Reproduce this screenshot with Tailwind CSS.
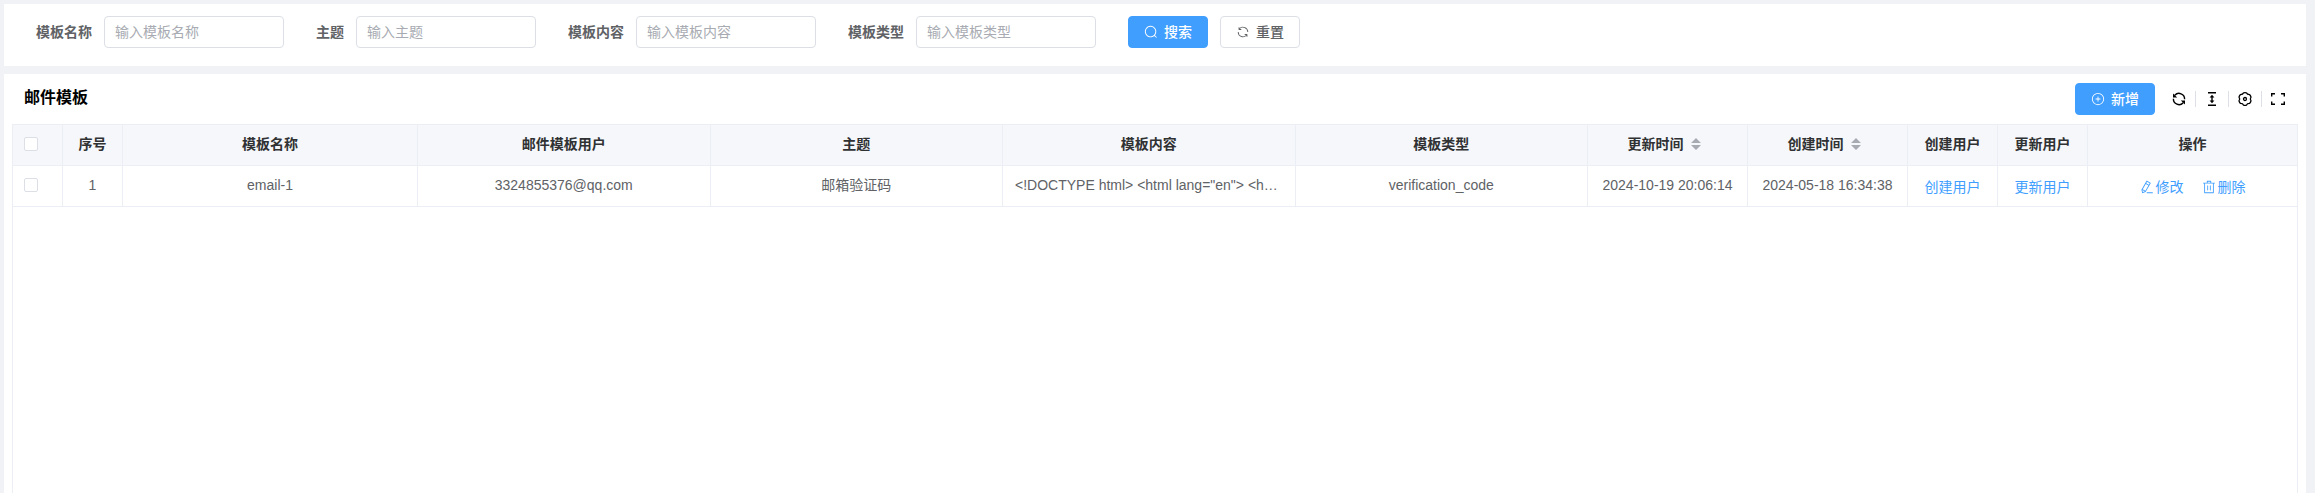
<!DOCTYPE html>
<html lang="zh-CN">
<head>
<meta charset="utf-8">
<title>邮件模板</title>
<script src="https://cdn.jsdelivr.net/npm/@tailwindcss/browser@4"></script>
</head>
<body class="flex min-h-screen flex-col gap-2 bg-[#f0f2f5] pt-1 pr-[9px] pl-1 font-['Liberation_Sans','Noto_Sans_CJK_SC',sans-serif] text-sm text-[#606266]">
<svg class="hidden">
  <symbol id="search" viewBox="0 0 1024 1024"><path fill="currentColor" d="m795.904 750.72 124.992 124.928a32 32 0 0 1-45.248 45.248L750.656 795.904a416 416 0 1 1 45.248-45.248zM480 832a352 352 0 1 0 0-704 352 352 0 0 0 0 704z"/></symbol>
  <symbol id="refresh" viewBox="0 0 1024 1024"><path fill="currentColor" d="M771.776 794.88A384 384 0 0 1 128 512h64a320 320 0 0 0 555.712 216.448H654.72a32 32 0 1 1 0-64h149.056a32 32 0 0 1 32 32v148.928a32 32 0 1 1-64 0v-50.56zM276.288 295.616h92.992a32 32 0 0 1 0 64H220.16a32 32 0 0 1-32-32V178.56a32 32 0 0 1 64 0v50.56A384 384 0 0 1 896.128 512h-64a320 320 0 0 0-555.776-216.384z"/></symbol>
  <symbol id="plus" viewBox="0 0 1024 1024"><path fill="currentColor" d="M352 480h320a32 32 0 1 1 0 64H352a32 32 0 0 1 0-64z M480 672V352a32 32 0 1 1 64 0v320a32 32 0 0 1-64 0z M512 896a384 384 0 1 0 0-768 384 384 0 0 0 0 768zm0 64a448 448 0 1 1 0-896 448 448 0 0 1 0 896z"/></symbol>
  <symbol id="trash" viewBox="0 0 1024 1024"><path fill="currentColor" d="M160 256H96a32 32 0 0 1 0-64h256V95.936a32 32 0 0 1 32-32h256a32 32 0 0 1 32 32V192h256a32 32 0 1 1 0 64h-64v672a32 32 0 0 1-32 32H192a32 32 0 0 1-32-32V256zm448-64v-64H416v64h192zM224 896h576V256H224v640zm192-128a32 32 0 0 1-32-32V416a32 32 0 0 1 64 0v320a32 32 0 0 1-32 32zm192 0a32 32 0 0 1-32-32V416a32 32 0 0 1 64 0v320a32 32 0 0 1-32 32z"/></symbol>
  <symbol id="pen" viewBox="0 0 1024 1024"><path fill="currentColor" d="m199.04 672.64 193.984 112 224-387.968-193.92-112-224 388.032zm-23.872 60.16 32.896 148.288 144.896-45.696L175.168 732.8zM455.04 229.248l193.92 112 56.704-98.112-193.984-112-56.64 98.112zM104.32 708.8l384-665.024 304.768 175.936L409.152 884.8h.064l-248.448 78.336L104.32 708.8zm384 254.272v-64h448v64h-448z"/></symbol>
  <symbol id="sort" viewBox="0 0 10 12"><path fill="#a8abb2" d="M5 0l5 5H0zM5 12L0 7h10z"/></symbol>
</svg>

<form class="flex flex-wrap items-center gap-x-8 bg-white px-8 pt-3 pb-[18px]">
  <div class="flex items-center gap-3"><label for="f-name" class="font-bold">模板名称</label><input id="f-name" type="text" placeholder="输入模板名称" class="h-8 w-[180px] rounded border border-[#dcdfe6] px-2.5 placeholder:text-[#a8abb2]"></div>
  <div class="flex items-center gap-3"><label for="f-subject" class="font-bold">主题</label><input id="f-subject" type="text" placeholder="输入主题" class="h-8 w-[180px] rounded border border-[#dcdfe6] px-2.5 placeholder:text-[#a8abb2]"></div>
  <div class="flex items-center gap-3"><label for="f-content" class="font-bold">模板内容</label><input id="f-content" type="text" placeholder="输入模板内容" class="h-8 w-[180px] rounded border border-[#dcdfe6] px-2.5 placeholder:text-[#a8abb2]"></div>
  <div class="flex items-center gap-3"><label for="f-type" class="font-bold">模板类型</label><input id="f-type" type="text" placeholder="输入模板类型" class="h-8 w-[180px] rounded border border-[#dcdfe6] px-2.5 placeholder:text-[#a8abb2]"></div>
  <div class="flex gap-3">
    <button type="button" class="flex h-8 items-center gap-1.5 rounded border border-[#409eff] bg-[#409eff] px-[15px] font-medium text-white"><svg class="size-3.5"><use href="#search"/></svg>搜索</button>
    <button type="reset" class="flex h-8 items-center gap-1.5 rounded border border-[#dcdfe6] bg-white px-[15px] font-medium"><svg class="size-3.5"><use href="#refresh"/></svg>重置</button>
  </div>
</form>

<main class="flex flex-1 flex-col bg-white px-2">
  <div class="flex h-[50px] items-center pr-1 pl-3">
    <h1 class="mr-auto pb-0.5 text-base font-bold text-black">邮件模板</h1>
    <button type="button" class="mr-2 flex h-8 items-center gap-1.5 rounded border border-[#409eff] bg-[#409eff] px-[15px] font-medium text-white"><svg class="size-3.5"><use href="#plus"/></svg>新增</button>
    <div class="flex h-4 divide-x divide-[#dcdfe6] text-black">
      <button type="button" aria-label="刷新" class="px-2"><svg class="size-4" viewBox="0 0 16 16" fill="none" stroke="currentColor" stroke-width="1.4"><path d="M13.6 8.2A5.6 5.6 0 0 0 3.8 4.3M2.4 7.8A5.6 5.6 0 0 0 12.2 11.7"/><path fill="currentColor" stroke="none" d="M2 2.4v4.2h4.2zM14 13.6V9.4H9.8z"/></svg></button>
      <button type="button" aria-label="密度" class="px-2"><svg class="size-4" viewBox="0 0 16 16" fill="none" stroke="currentColor" stroke-width="1.4"><path d="M4 1.7h8M4 14.3h8M8 5v6"/><path fill="currentColor" stroke="none" d="M8 3.8l2.4 2.7H5.6zM8 12.2L5.6 9.5h4.8z"/></svg></button>
      <button type="button" aria-label="列设置" class="px-2"><svg class="size-4" viewBox="0 0 16 16" fill="none" stroke="currentColor" stroke-width="1.3" stroke-linejoin="round"><path d="M6.6 1.8Q8 1.4 9.4 1.8Q10 3.7 12.7 3.7Q13.7 4.8 14 6.1Q12.6 8 14 9.9Q13.7 11.2 12.7 12.3Q10 12.3 9.4 14.2Q8 14.6 6.6 14.2Q6 12.3 3.3 12.3Q2.3 11.2 2 9.9Q3.4 8 2 6.1Q2.3 4.8 3.3 3.7Q6 3.7 6.6 1.8Z"/><circle cx="8" cy="8" r="1.5"/></svg></button>
      <button type="button" aria-label="全屏" class="px-2"><svg class="size-4" viewBox="0 0 16 16" fill="none" stroke="currentColor" stroke-width="1.4"><path d="M1.7 5.5V2.7H5M11 2.7h3.3v2.8M14.3 10.5v2.8H11M5 13.3H1.7v-2.8"/></svg></button>
    </div>
  </div>

  <div class="flex-1 border-x border-t border-[#ebeef5]">
    <table class="w-full table-fixed border-separate border-spacing-0 text-center [&_td]:h-[41px] [&_td]:border-r [&_td]:border-b [&_td]:border-[#ebeef5] [&_td]:pb-0.5 [&_td:last-child]:border-r-0 [&_th]:h-[41px] [&_th]:border-r [&_th]:border-b [&_th]:border-[#ebeef5] [&_th]:pb-0.5 [&_th:last-child]:border-r-0">
      <colgroup><col class="w-[50px]"><col class="w-[60px]"><col class="w-[295px]"><col><col><col><col><col class="w-[160px]"><col class="w-[160px]"><col class="w-[90px]"><col class="w-[90px]"><col class="w-[209px]"></colgroup>
      <thead class="bg-[#f5f7fa] text-[#303133]">
        <tr>
          <th class="pl-[11px]"><input type="checkbox" aria-label="全选" class="block size-3.5 appearance-none rounded-xs border border-[#dcdfe6] bg-white"></th>
          <th>序号</th><th>模板名称</th><th>邮件模板用户</th><th>主题</th><th>模板内容</th><th>模板类型</th>
          <th><button type="button" class="inline-flex items-center gap-[7px] pr-[7px] align-top font-bold">更新时间<svg class="h-3 w-2.5"><use href="#sort"/></svg></button></th>
          <th><button type="button" class="inline-flex items-center gap-[7px] pr-[7px] align-top font-bold">创建时间<svg class="h-3 w-2.5"><use href="#sort"/></svg></button></th>
          <th>创建用户</th><th>更新用户</th><th>操作</th>
        </tr>
      </thead>
      <tbody>
        <tr>
          <td class="pl-[11px]"><input type="checkbox" aria-label="选择第 1 行" class="block size-3.5 appearance-none rounded-xs border border-[#dcdfe6] bg-white"></td>
          <td>1</td><td>email-1</td><td>3324855376@qq.com</td><td>邮箱验证码</td>
          <td class="truncate px-3 text-left">&lt;!DOCTYPE html&gt; &lt;html lang="en"&gt; &lt;head&gt;</td>
          <td>verification_code</td><td>2024-10-19 20:06:14</td><td>2024-05-18 16:34:38</td>
          <td class="pt-[3px]"><a href="#" class="text-[#409eff]">创建用户</a></td>
          <td class="pt-[3px]"><a href="#" class="text-[#409eff]">更新用户</a></td>
          <td class="pt-[3px]"><div class="flex justify-center gap-[18px] text-[#409eff]"><a href="#" class="flex items-center gap-0.5"><svg class="size-3.5"><use href="#pen"/></svg>修改</a><a href="#" class="flex items-center gap-0.5"><svg class="size-3.5"><use href="#trash"/></svg>删除</a></div></td>
        </tr>
      </tbody>
    </table>
  </div>
</main>
</body>
</html>
